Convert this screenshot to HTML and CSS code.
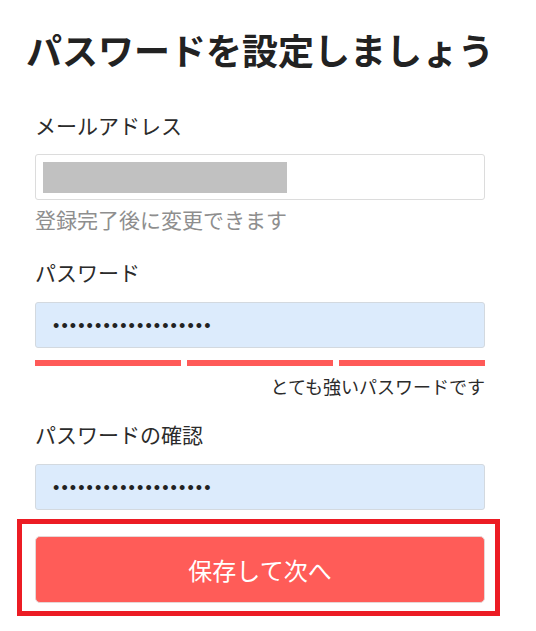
FILE: index.html
```html
<!DOCTYPE html>
<html lang="ja">
<head>
<meta charset="utf-8">
<title>パスワードを設定しましょう</title>
<link rel="stylesheet" href="styles.css">
</head>
<body>
<main class="page">
  <h1 class="title">パスワードを設定しましょう</h1>
  <form class="form">
    <div class="field">
      <label class="label">メールアドレス</label>
      <div class="input input-email"><span class="redacted"></span></div>
      <p class="hint">登録完了後に変更できます</p>
    </div>
    <div class="field field-pw">
      <label class="label">パスワード</label>
      <div class="input input-pw"><span class="dots">•••••••••••••••••••</span></div>
      <div class="strength">
        <span class="bar"></span><span class="bar"></span><span class="bar"></span>
      </div>
      <p class="strength-text">とても強いパスワードです</p>
    </div>
    <div class="field field-confirm">
      <label class="label">パスワードの確認</label>
      <div class="input input-pw"><span class="dots">•••••••••••••••••••</span></div>
    </div>
    <div class="actions">
      <button type="button" class="btn">保存して次へ</button>
      <span class="highlight"></span>
    </div>
  </form>
</main>
</body>
</html>
```
FILE: styles.css
```css
* { box-sizing: border-box; }
html, body { margin: 0; padding: 0; background: #fff; }
body {
  font-family: "Noto Sans CJK JP", "Noto Sans", sans-serif;
  color: #2b2b2b;
}
.page {
  width: 536px;
  padding: 29px 0 40px 0;
}
.title {
  margin: 0 0 0 26px;
  font-size: 36px;
  line-height: 40px;
  font-weight: 700;
  color: #222;
}
.form {
  margin: 42px 0 0 35px;
  width: 450px;
  display: flex;
  flex-direction: column;
}
.field { display: flex; flex-direction: column; }
.label {
  display: block;
  font-size: 21px;
  line-height: 28px;
  color: #2b2b2b;
  margin-bottom: 15px;
}
.input {
  height: 46px;
  border: 1px solid #dcdcdc;
  border-radius: 3px;
  display: flex;
  align-items: center;
}
.input-email {
  background: #fff;
  padding-left: 7px;
}
.redacted {
  display: block;
  width: 244px;
  height: 31px;
  background: #c1c1c1;
}
.hint {
  margin: 5px 0 0 0;
  font-size: 21px;
  line-height: 28px;
  color: #8e8e8e;
}
.field-pw { margin-top: 25px; }
.field-pw .label { margin-bottom: 16px; }
.input-pw {
  background: #dcebfc;
  border-color: #d3d9df;
  padding-left: 17px;
}
.dots {
  font-family: "Liberation Sans", sans-serif;
  font-size: 18px;
  letter-spacing: 2.1px;
  color: #222;
  line-height: 1;
  padding-top: 2px;
}
.strength {
  margin-top: 12px;
  display: grid;
  grid-template-columns: 1fr 1fr 1fr;
  gap: 6px;
}
.bar {
  display: block;
  height: 6px;
  background: #ff5a58;
}
.strength-text {
  margin: 8px 0 0 0;
  text-align: right;
  font-size: 18px;
  line-height: 24px;
  color: #2b2b2b;
}
.field-confirm { margin-top: 22px; }
.field-confirm .label { margin-bottom: 16px; }
.actions {
  position: relative;
  margin-top: 26px;
}
.btn {
  display: block;
  width: 450px;
  height: 67px;
  border: 1px solid #e6d6d6;
  border-radius: 5px;
  background: #ff5c58;
  color: #fff;
  font-family: "Noto Sans CJK JP", "Noto Sans", sans-serif;
  font-size: 24px;
  padding: 0;
}
.highlight {
  position: absolute;
  left: -18px;
  top: -17px;
  width: 483px;
  height: 97px;
  border: 5px solid #ec1c24;
  pointer-events: none;
}
```
